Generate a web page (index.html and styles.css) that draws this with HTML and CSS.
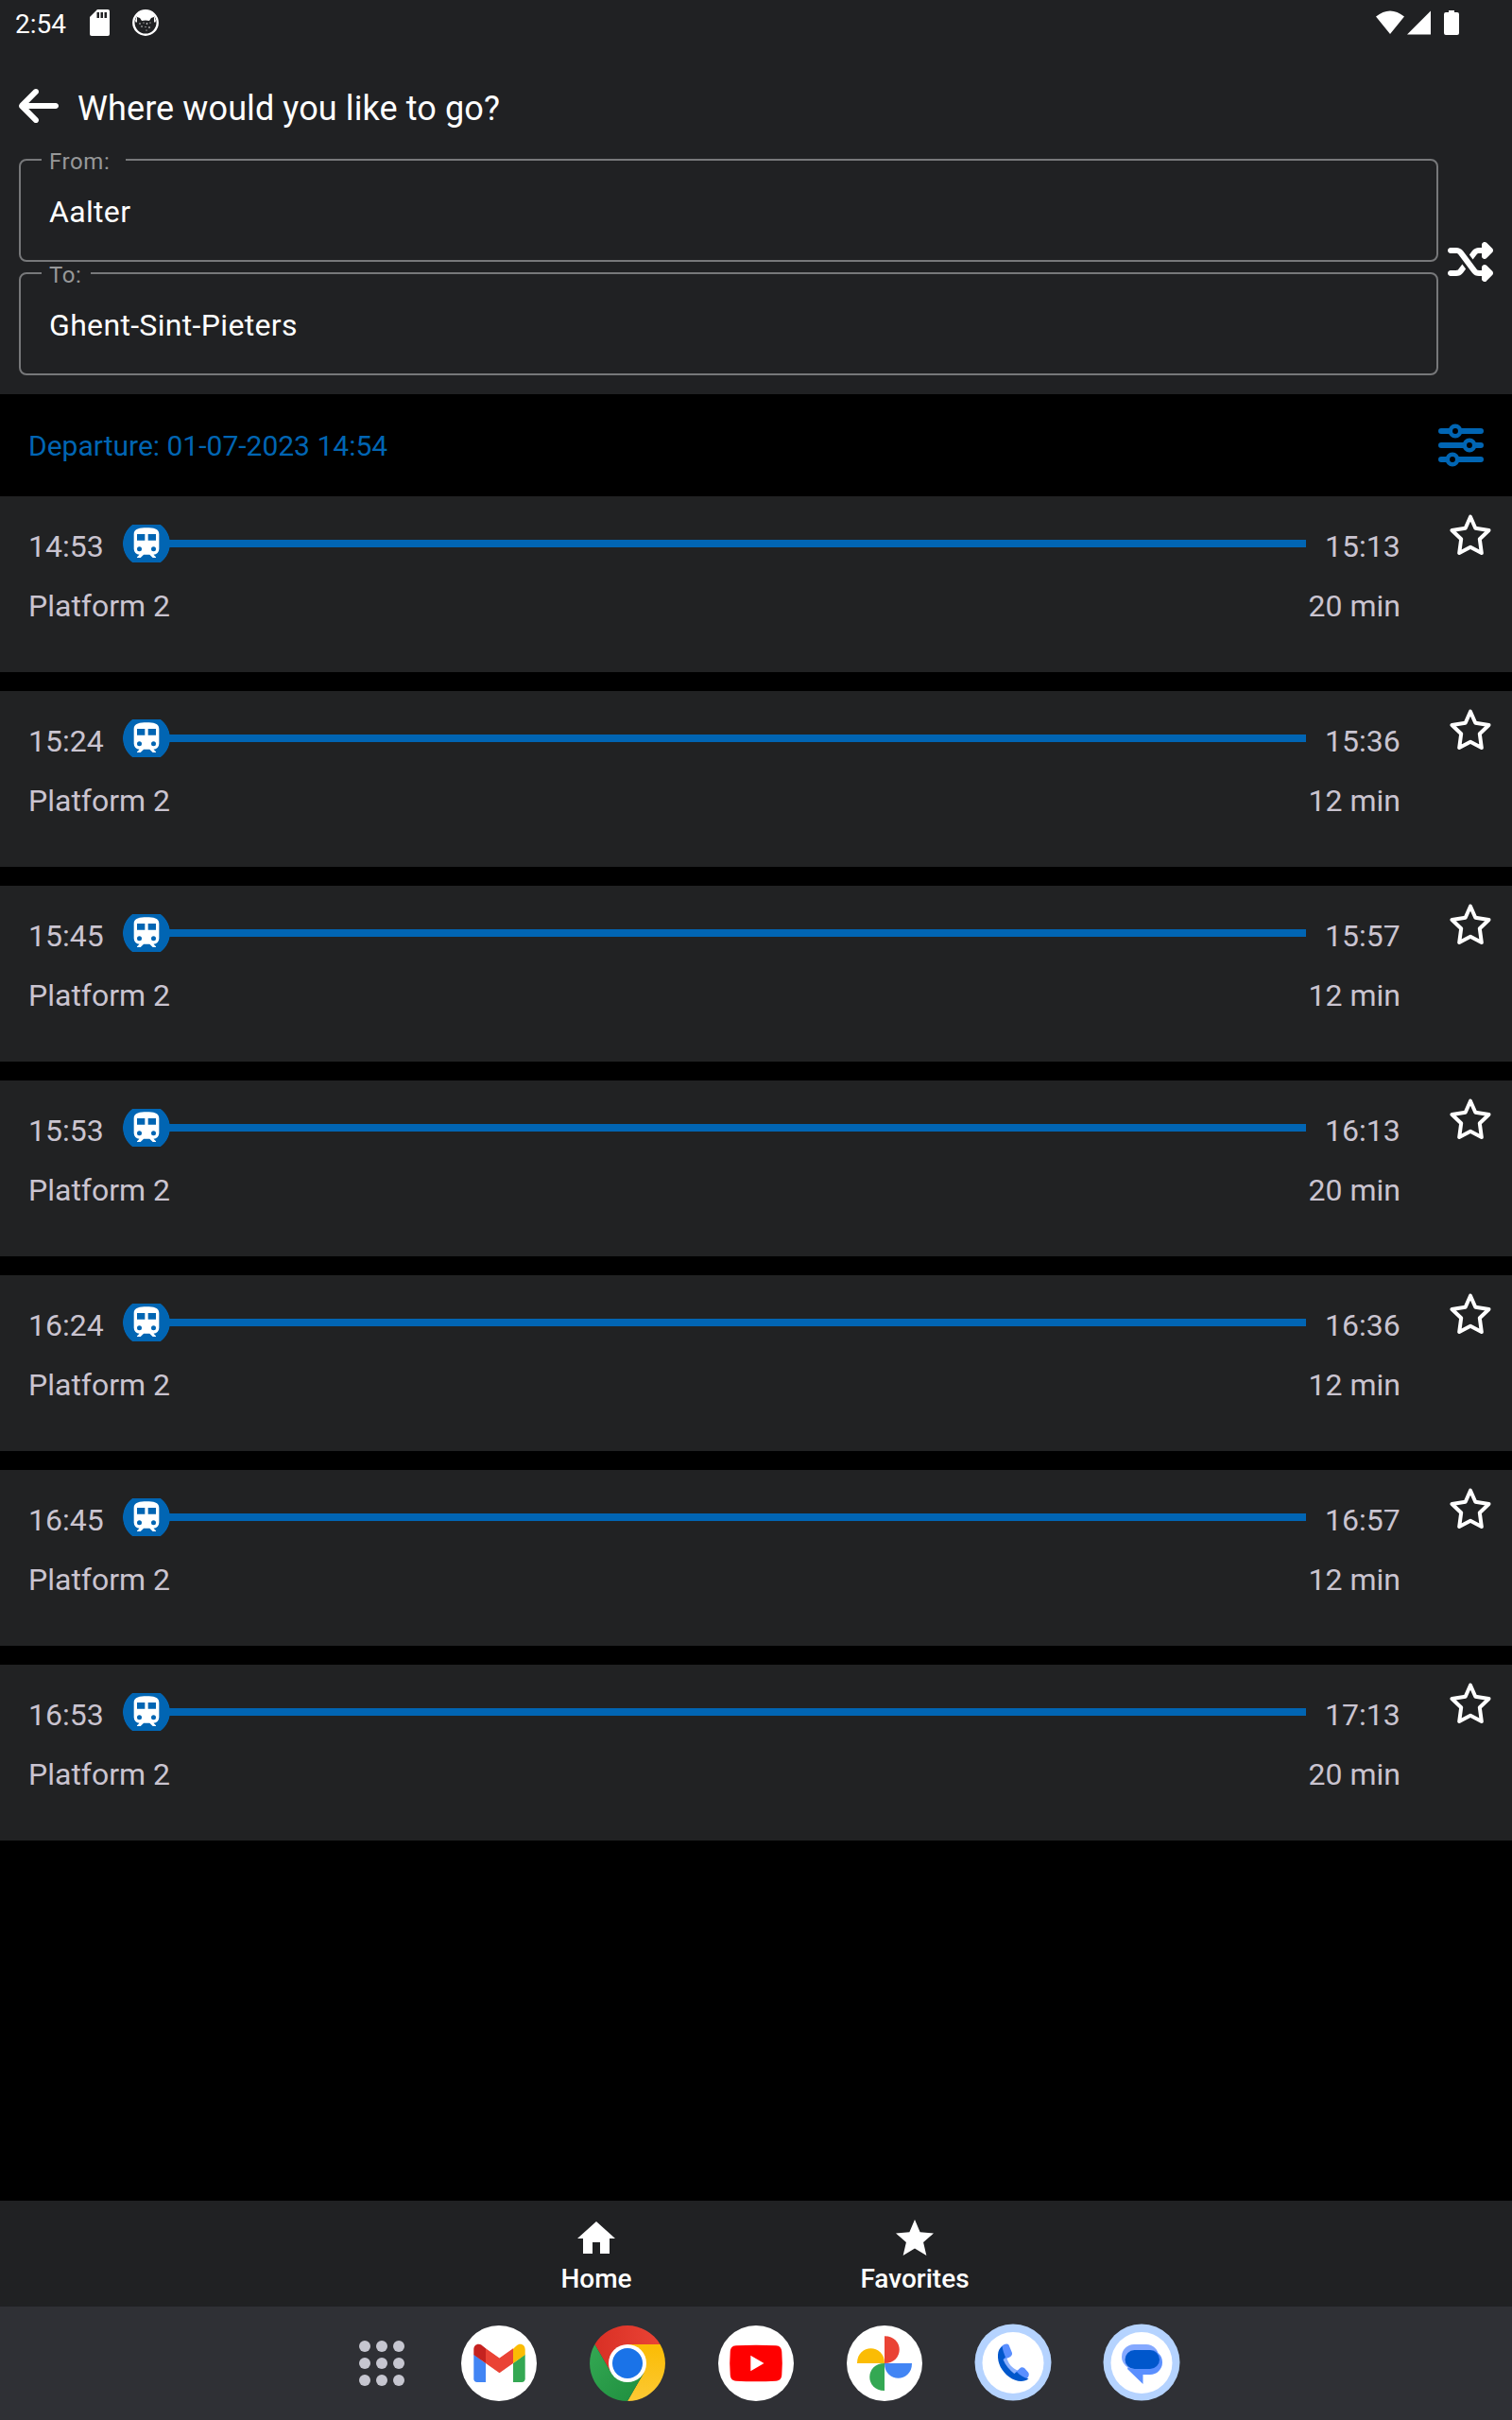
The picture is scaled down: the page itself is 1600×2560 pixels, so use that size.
FILE: index.html
```
<!DOCTYPE html>
<html lang="en">
<head>
<meta charset="utf-8">
<title>Where would you like to go?</title>
<link rel="stylesheet" href="styles.css">
</head>
<body>
<svg class="defs" width="0" height="0" aria-hidden="true">
  <symbol id="train" viewBox="0 0 24 24"><path d="M12 2C8 2 4 2.500 4 6V15.500A3.500 3.500 0 0 0 7.500 19L6 20.500V21H8.230L10.230 19H14L16 21H18V20.500L16.500 19A3.500 3.500 0 0 0 20 15.500V6C20 2.500 16.420 2 12 2M7.500 17A1.500 1.500 0 0 1 6 15.500 1.500 1.500 0 0 1 7.500 14 1.500 1.500 0 0 1 9 15.500 1.500 1.500 0 0 1 7.500 17M11 10H6V6H11V10M13 10V6H18V10H13M16.500 17A1.500 1.500 0 0 1 15 15.500 1.500 1.500 0 0 1 16.500 14 1.500 1.500 0 0 1 18 15.500 1.500 1.500 0 0 1 16.500 17Z"/></symbol>
  <symbol id="star" viewBox="0 0 44 44"><path d="M22 2.700L27.300 14.800 41.500 17 31.800 26.300 33.800 41 22 34.700 10.200 41 12.200 26.300 2.500 17 16.700 14.800Z" fill="none" stroke="#fff" stroke-width="4" stroke-linejoin="round"/></symbol>
</svg>
<header class="header">
  <div class="status">
    <span class="clock">2:54</span>
    <svg class="sd" viewBox="0 0 22 28"><path fill="#fff" d="M8 0H19a2 2 0 0 1 2 2V26a2 2 0 0 1-2 2H2a2 2 0 0 1-2-2V8Z"/><path d="M7.500 3h2.500v6H7.500zM11.500 3h2.500v6h-2.500zM15.500 3h2.500v6h-2.500z" fill="#202123"/></svg>
    <svg class="cat" viewBox="0 0 28 28"><circle cx="14" cy="14" r="12.700" fill="none" stroke="#fff" stroke-width="2.400"/><path fill="#fff" d="M5 6Q14-3 23 6L25 12 24 14 23 13V8L20 9 18 12Q14 11 10 12L8 9 5 8V13L4 14 3 12Z"/><g fill="#fff"><circle cx="8" cy="15" r=".7"/><circle cx="12" cy="14" r=".6"/><circle cx="15.500" cy="15" r=".8"/><circle cx="19" cy="14" r=".6"/><circle cx="10" cy="18" r=".7"/><circle cx="14" cy="18.500" r=".6"/><circle cx="18" cy="19" r=".8"/><circle cx="15" cy="22" r=".6"/></g></svg>
    <svg class="signals" viewBox="0 0 88 26"><path fill="#fff" d="M0 6.500Q15-5.500 30 6.500L15 25ZM33 25.500L58 .5V25.500ZM77 0h6v2h3a2 2 0 0 1 2 2V24a2 2 0 0 1-2 2H74a2 2 0 0 1-2-2V4a2 2 0 0 1 2-2h3Z"/></svg>
  </div>
  <div class="title-row">
    <svg class="back" viewBox="0 0 448 512"><path d="M9.400 233.400c-12.500 12.500-12.500 32.800 0 45.300l160 160c12.500 12.500 32.800 12.500 45.300 0s12.500-32.800 0-45.300L109.200 288 416 288c17.700 0 32-14.300 32-32s-14.300-32-32-32l-306.700 0L214.600 118.600c12.500-12.500 12.500-32.800 0-45.300s-32.800-12.500-45.300 0l-160 160z"/></svg>
    <h1 class="title">Where would you like to go?</h1>
  </div>
  <div class="search">
    <div class="fields">
      <div class="field"><span class="label label-from">From:</span>Aalter</div>
      <div class="field"><span class="label label-to">To:</span>Ghent-Sint-Pieters</div>
    </div>
    <svg class="shuffle" viewBox="0 0 512 512"><path d="M403.800 34.400c12-5 25.700-2.200 34.900 6.900l64 64c6 6 9.400 14.100 9.400 22.600s-3.400 16.600-9.400 22.600l-64 64c-9.200 9.200-22.900 11.900-34.900 6.900s-19.800-16.600-19.800-29.600V160H352c-10.100 0-19.600 4.700-25.600 12.800L284 229.300 244 176l31.200-41.600C293.300 110.200 321.800 96 352 96h32V64c0-12.900 7.800-24.600 19.800-29.600zM164 282.700L204 336l-31.200 41.600C154.700 401.800 126.200 416 96 416H32c-17.700 0-32-14.300-32-32s14.300-32 32-32H96c10.100 0 19.600-4.700 25.600-12.800L164 282.700zm274.600 188c-9.200 9.200-22.900 11.900-34.900 6.900s-19.800-16.600-19.800-29.600V416H352c-30.200 0-58.700-14.200-76.800-38.400L121.600 172.800c-6-8.100-15.500-12.800-25.600-12.800H32c-17.700 0-32-14.300-32-32s14.300-32 32-32H96c30.200 0 58.700 14.200 76.800 38.400L326.400 339.200c6 8.100 15.500 12.800 25.600 12.800h32V320c0-12.900 7.800-24.600 19.800-29.600s25.700-2.200 34.900 6.900l64 64c6 6 9.400 14.100 9.400 22.600s-3.400 16.600-9.400 22.600l-64 64z"/></svg>
  </div>
</header>
<div class="departure">
  <span class="departure-text">Departure: 01-07-2023 14:54</span>
  <svg class="filters" viewBox="0 0 48 46"><path d="M3 8H45M3 23H45M3 38H45" stroke-width="6" stroke-linecap="round"/><g stroke-width="4.500"><circle cx="18" cy="8" r="5.200"/><circle cx="33" cy="23" r="5.200"/><circle cx="15" cy="38" r="5.200"/></g></svg>
</div>
<main class="list">
  <article class="card"><div class="trip"><div class="leg"><time>14:53</time><span class="badge"><svg><use href="#train"/></svg></span><i class="line"></i><time class="end">15:13</time></div><div class="meta"><span>Platform 2</span><span>20 min</span></div></div><svg class="star"><use href="#star"/></svg></article>
  <article class="card"><div class="trip"><div class="leg"><time>15:24</time><span class="badge"><svg><use href="#train"/></svg></span><i class="line"></i><time class="end">15:36</time></div><div class="meta"><span>Platform 2</span><span>12 min</span></div></div><svg class="star"><use href="#star"/></svg></article>
  <article class="card"><div class="trip"><div class="leg"><time>15:45</time><span class="badge"><svg><use href="#train"/></svg></span><i class="line"></i><time class="end">15:57</time></div><div class="meta"><span>Platform 2</span><span>12 min</span></div></div><svg class="star"><use href="#star"/></svg></article>
  <article class="card"><div class="trip"><div class="leg"><time>15:53</time><span class="badge"><svg><use href="#train"/></svg></span><i class="line"></i><time class="end">16:13</time></div><div class="meta"><span>Platform 2</span><span>20 min</span></div></div><svg class="star"><use href="#star"/></svg></article>
  <article class="card"><div class="trip"><div class="leg"><time>16:24</time><span class="badge"><svg><use href="#train"/></svg></span><i class="line"></i><time class="end">16:36</time></div><div class="meta"><span>Platform 2</span><span>12 min</span></div></div><svg class="star"><use href="#star"/></svg></article>
  <article class="card"><div class="trip"><div class="leg"><time>16:45</time><span class="badge"><svg><use href="#train"/></svg></span><i class="line"></i><time class="end">16:57</time></div><div class="meta"><span>Platform 2</span><span>12 min</span></div></div><svg class="star"><use href="#star"/></svg></article>
  <article class="card"><div class="trip"><div class="leg"><time>16:53</time><span class="badge"><svg><use href="#train"/></svg></span><i class="line"></i><time class="end">17:13</time></div><div class="meta"><span>Platform 2</span><span>20 min</span></div></div><svg class="star"><use href="#star"/></svg></article>
</main>
<nav class="tabs">
  <a class="tab"><svg viewBox="0 0 24 24"><path d="M10 20v-6h4v6h5v-8h3L12 3 2 12h3v8z"/></svg>Home</a>
  <a class="tab"><svg viewBox="0 0 24 24"><path d="M12 17.270L18.180 21l-1.640-7.030L22 9.240l-7.190-.61L12 2 9.190 8.630 2 9.240l5.460 4.730L5.820 21z"/></svg>Favorites</a>
</nav>
<footer class="dock">
  <svg class="apps" viewBox="0 0 48 48"><circle cx="6" cy="6" r="6"/><circle cx="24" cy="6" r="6"/><circle cx="42" cy="6" r="6"/><circle cx="6" cy="24" r="6"/><circle cx="24" cy="24" r="6"/><circle cx="42" cy="24" r="6"/><circle cx="6" cy="42" r="6"/><circle cx="24" cy="42" r="6"/><circle cx="42" cy="42" r="6"/></svg>
  <svg class="app" viewBox="0 0 80 80"><circle cx="40" cy="40" r="40" fill="#fff"/><path fill="#4285f4" d="M13.300 30.500L26 40V60H17a3.700 3.700 0 0 1-3.700-3.700Z"/><path fill="#34a853" d="M55 40l12.700-9.500V56.300A3.700 3.700 0 0 1 64 60H55Z"/><path fill="#fbbc04" d="M55 24.700l3.500-3.200c3.500-3.500 9.200-1.500 9.200 4V31L55 40Z"/><path fill="#ea4335" d="M26 40V24.300L40.500 34.500 55 24.300V40L40.500 50.300Z"/><path fill="#c5221f" d="M13.300 31V25.500c0-5.500 5.500-7.500 9.200-4L26 24.300V40Z"/></svg>
  <svg class="app" viewBox="0 0 80 80"><defs><linearGradient id="cr" x1="0" x2="1"><stop stop-color="#d93025"/><stop offset="1" stop-color="#ea4335"/></linearGradient><linearGradient id="cg" x1="0" y1="0" x2="1" y2="1"><stop stop-color="#34a853"/><stop offset="1" stop-color="#1e8e3e"/></linearGradient><linearGradient id="cy" x1="0" y1="1" x2="0" y2="0"><stop stop-color="#fcc934"/><stop offset="1" stop-color="#fbbc04"/></linearGradient></defs><path fill="url(#cr)" d="M5.400 20A40 40 0 0 1 74.600 20H40L22.700 50Z"/><path fill="url(#cy)" d="M40 20H74.600A40 40 0 0 1 40 80L57.300 50Z"/><path fill="url(#cg)" d="M40 80A40 40 0 0 1 5.400 20L22.700 50H57.300Z"/><circle cx="40" cy="40" r="20" fill="#fff"/><circle cx="40" cy="40" r="16" fill="#1a73e8"/></svg>
  <svg class="app" viewBox="0 0 80 80"><circle cx="40" cy="40" r="40" fill="#fff"/><path fill="#f00" d="M19 21.300Q40 20.200 61 21.300C65.500 21.600 67 24 67.300 28Q68.300 40 67.300 52C67 56 65.500 58.400 61 58.700Q40 59.800 19 58.700C14.500 58.400 13 56 12.700 52Q11.700 40 12.700 28C13 24 14.500 21.600 19 21.300Z"/><path fill="#fff" d="M34.300 31.800V48.200L48.500 40Z"/></svg>
  <svg class="app" viewBox="0 0 80 80"><circle cx="40" cy="40" r="40" fill="#fff"/><path fill="#ea4335" d="M40 11.300c21 0 21 28.700 0 28.700Z"/><path fill="#4285f4" d="M40 40H69c0 21-29 21-29 0Z"/><path fill="#34a853" d="M40 69c-21 0-21-29 0-29Z"/><path fill="#fbbc04" d="M11 40c0-21 29-21 29 0Z"/></svg>
  <svg class="app ring" viewBox="0 0 82 82"><circle cx="41" cy="41" r="40.500" fill="#b5d3ff"/><circle cx="41" cy="41.500" r="32.500" fill="#fff"/><path d="M29 36C32 44 37 50 43 53L46.500 50C40 47 36 43 34 35Z" fill="#8ab0ff"/><path d="M28.500 24.500C31 21.500 35 20.500 36.500 22.500L40 31Q40.500 34 36.500 36L30 38Z" fill="#5a8fff"/><path d="M42 53L48 47.500Q50 45.500 53 47L57 51.500C59 54 57 58 53.500 59.500Z" fill="#5a8fff"/><path fill="#0057cc" d="M29.500 24C30 28 31.500 32 33 35.500L30.500 38C33 44 37.500 49.500 42.500 53L45 51C48 54.500 52 57 57.500 58.500 53 62 44 62 37 56.500 29 50.500 24.500 42 25 33 25.200 29 27 25.500 29.500 24Z"/></svg>
  <svg class="app ring" viewBox="0 0 82 82"><circle cx="41" cy="41" r="40.500" fill="#b5d3ff"/><circle cx="41" cy="41.500" r="32.500" fill="#fff"/><path fill="#5a8fff" d="M33 28H50a13 13 0 0 1 0 26H42.500V64L26 48Z"/><rect x="20" y="22" width="39" height="26" rx="13" fill="#85a9ff"/><path d="M56 28.500Q59 31 59 35 59 41 55 45L50 48 48 28Z" fill="#5a8fff"/><rect x="23.500" y="28" width="36.500" height="20" rx="10" fill="#0057cc"/></svg>
</footer>
</body>
</html>
```
FILE: styles.css
```
* { box-sizing: border-box; }
body {
  margin: 0;
  width: 1600px;
  height: 2560px;
  display: flex;
  flex-direction: column;
  background: #000;
  color: #fff;
  font-family: Roboto, sans-serif;
  font-size: 32px;
}
svg { display: block; flex: none; fill: #fff; }
.defs { position: absolute; }

.header { height: 417px; background: #202123; }
.status {
  display: flex;
  align-items: flex-start;
  height: 51px;
  padding: 0 56px 0 16px;
}
.clock { width: 79px; font-size: 28px; line-height: 51px; }
.sd { width: 22px; height: 28px; margin-top: 10px; }
.cat { width: 28px; height: 28px; margin: 10px 0 0 23px; }
.signals { width: 88px; height: 26px; margin: 11px 0 0 auto; }

.title-row { display: flex; gap: 20px; padding: 37px 20px 0; }
.back { width: 42px; height: 48px; }
.title {
  margin: 0;
  padding-top: 3px;
  font-size: 36px;
  font-weight: 400;
  line-height: 48px;
  letter-spacing: .1px;
}

.search {
  display: flex;
  align-items: center;
  gap: 10px;
  padding: 29px 20px 0;
}
.fields { flex: 1; display: flex; flex-direction: column; gap: 11px; }
.field {
  position: relative;
  display: flex;
  align-items: center;
  height: 109px;
  padding: 3px 30px 0;
  border: 2px solid #77787a;
  border-radius: 8px;
  letter-spacing: .33px;
}
.label {
  position: absolute;
  top: -13px;
  left: 22px;
  padding-left: 8px;
  background: #202123;
  color: #979899;
  font-size: 24px;
  line-height: 28px;
  letter-spacing: .6px;
}
.label-from { width: 89px; }
.label-to { width: 52px; }
.shuffle { width: 48px; height: 48px; margin-top: -11px; }

.departure {
  display: flex;
  align-items: center;
  justify-content: space-between;
  height: 108px;
  padding: 1px 30px 0;
  color: #0165b3;
  font-size: 30px;
}
.filters { width: 48px; height: 46px; margin-top: -2px; fill: #000; stroke: #0165b3; }

.list { flex: 1; display: flex; flex-direction: column; gap: 20px; }
.card {
  display: flex;
  justify-content: space-between;
  height: 186px;
  padding: 20px 22px 0 30px;
  background: #212223;
  color: #cac4d0;
}
.trip { width: 1452px; padding-top: 10px; }
.leg { display: flex; align-items: flex-start; line-height: 46px; }
.leg time { width: 100px; }
.leg .end { padding-left: 20px; }
.badge {
  display: flex;
  justify-content: center;
  width: 50px;
  height: 40px;
  overflow: hidden;
  background: radial-gradient(circle, #0165b3 24.500px, transparent 25.200px);
}
.badge svg { width: 40px; height: 40px; }
.line { flex: 1; height: 8px; margin: 16px 0 0 -1px; background: #0165b3; }
.meta { display: flex; justify-content: space-between; margin-top: 20px; line-height: 40px; }
.star { width: 44px; height: 44px; margin-top: -1px; }

.tabs {
  display: flex;
  justify-content: center;
  height: 112px;
  padding: 16px 1px 0 0;
  background: #202123;
}
.tab {
  display: flex;
  flex-direction: column;
  align-items: center;
  width: 337px;
  font-size: 28px;
  font-weight: 500;
  line-height: 38px;
}
.tab svg { width: 48px; height: 48px; }

.dock {
  display: flex;
  justify-content: center;
  align-items: center;
  gap: 56px;
  height: 120px;
  padding-left: 28px;
  background: #2f3035;
}
.apps { width: 48px; height: 48px; margin-right: 4px; fill: #c6c6d0; }
.app { width: 80px; height: 80px; }
.ring { width: 82px; height: 82px; margin: -2px -1px 0; }
```
